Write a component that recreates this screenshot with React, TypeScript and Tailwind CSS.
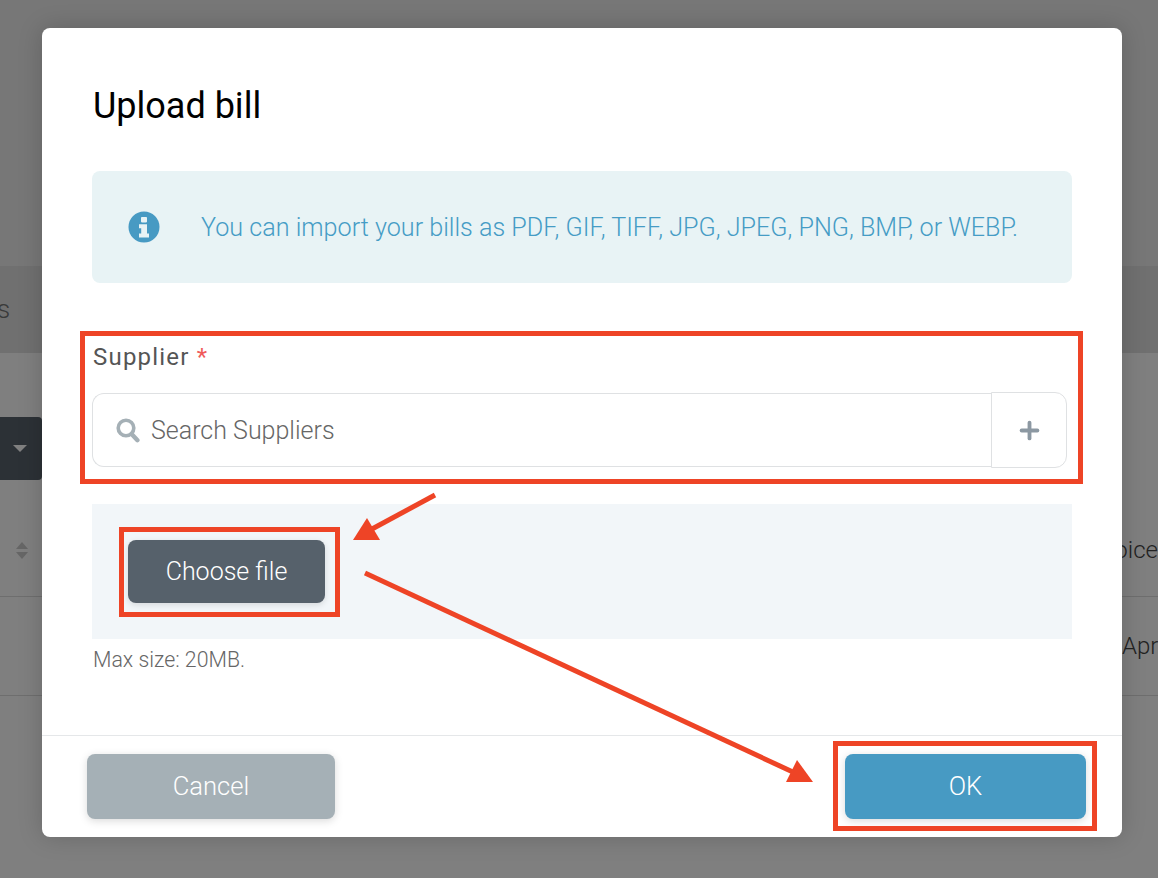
import { Plus } from 'lucide-react';

const FONT = "font-['Roboto','Liberation_Sans',sans-serif]";

function InfoIcon() {
  return (
    <svg width="32" height="32" viewBox="0 0 32 32" className="shrink-0">
      <circle cx="16" cy="16" r="15.5" fill="#479ac3" />
      <rect x="13" y="6" width="6" height="5.4" rx="0.8" fill="#e8f3f5" />
      <path d="M11 13.2h8v9.4h2v4h-10v-4h2.2v-5.4h-2.2z" fill="#e8f3f5" />
    </svg>
  );
}

function SearchIcon() {
  return (
    <svg width="24" height="25" viewBox="0 0 24 25" fill="none" className="shrink-0">
      <circle cx="10" cy="10" r="7.8" stroke="#a5b0b6" strokeWidth="3.6" />
      <path d="M15.6 16L21.4 22.2" stroke="#a5b0b6" strokeWidth="4.4" strokeLinecap="round" />
    </svg>
  );
}

function Backdrop() {
  return (
    <div className="flex flex-col h-full bg-[#7f7f7f] text-[#222]">
      <div className="h-[266px] bg-[#777777]" />
      <div className="h-[87px] bg-[#707070] flex items-center">
        <span className="text-[26px] font-light text-[#3a3a3a] -ml-[3px]">s</span>
      </div>
      <div className="h-[64px]" />
      <div className="h-[63px] w-[42px] bg-[#2c3136] rounded-r flex items-center justify-end pr-[15px]">
        <span className="w-0 h-0 border-x-[7px] border-x-transparent border-t-[7px] border-t-[#808080]" />
      </div>
      <div className="h-[117px] border-b border-[#6e6e6e] flex items-center justify-between pt-[24px]">
        <span className="ml-[16px] flex flex-col gap-[3px]">
          <span className="w-0 h-0 border-x-[6px] border-x-transparent border-b-[7px] border-b-[#666]" />
          <span className="w-0 h-0 border-x-[6px] border-x-transparent border-t-[7px] border-t-[#666]" />
        </span>
        <span className="text-[24px] font-light w-[36px] overflow-hidden whitespace-nowrap flex justify-end">Invoice</span>
      </div>
      <div className="h-[99px] border-b border-[#6e6e6e] flex items-center justify-end">
        <span className="text-[24px] font-light w-[36px] overflow-hidden whitespace-nowrap">Apr</span>
      </div>
    </div>
  );
}

function Dialog() {
  return (
    <div className="absolute left-[42px] top-[28px] w-[1080px] h-[809px] bg-white rounded-lg shadow-[0_0_24px_rgba(0,0,0,0.18)] flex flex-col">
      <div className="flex-1 px-[50px] pt-[55px]">
        <h2 className="text-[36px] leading-[46px] text-black font-normal pl-[1px]">Upload bill</h2>
        <div className="mt-[42px] h-[112px] bg-[#e8f3f5] rounded-lg flex items-center pl-[36px] gap-[41px]">
          <InfoIcon />
          <p className="text-[25.15px] font-light text-[#459cc5] whitespace-nowrap pt-[1px]">
            You can import your bills as PDF, GIF, TIFF, JPG, JPEG, PNG, BMP, or WEBP.
          </p>
        </div>
        <label className="block mt-[58px] pl-[1px] text-[24px] leading-[32px] font-[450] tracking-[1.2px] text-[#555]">
          Supplier <span className="text-[#ef5a5a]">*</span>
        </label>
        <div className="mt-[19px] flex items-center w-[975px]">
          <div className="w-[900px] h-[74px] border border-[#dfe1e3] border-r-0 rounded-l-xl flex items-center pl-[23px] gap-[11px]">
            <SearchIcon />
            <span className="text-[25px] font-light text-[#666] pt-[1px]">Search Suppliers</span>
          </div>
          <div className="w-[76px] h-[76px] border border-[#dfe1e3] rounded-r-xl flex items-center justify-center">
            <Plus size={27} strokeWidth={3.4} className="text-[#8c98a2]" />
          </div>
        </div>
        <div className="mt-[36px] h-[135px] bg-[#f2f6f9] flex items-center pl-[36px]">
          <button className="w-[197px] h-[63px] rounded-lg bg-[#56616b] text-white text-[25px] font-light shadow-[0_2px_6px_rgba(0,0,0,0.12)]">
            Choose file
          </button>
        </div>
        <p className="mt-[7px] pl-[1px] text-[21.3px] leading-[28px] font-light text-[#666]">Max size: 20MB.</p>
      </div>
      <div className="h-[102px] border-t border-[#e5e7e9] flex items-start justify-between pl-[45px] pr-[36px] pt-[18px]">
        <button className="w-[248px] h-[65px] rounded-lg bg-[#a5b0b6] text-white text-[25.6px] font-light shadow-[0_2px_8px_rgba(0,0,0,0.15)]">
          Cancel
        </button>
        <button className="w-[241px] h-[65px] rounded-lg bg-[#479ac3] text-white text-[25.6px] font-light shadow-[0_2px_8px_rgba(0,0,0,0.15)]">
          OK
        </button>
      </div>
    </div>
  );
}

function Annotations() {
  return (
    <>
      <div className="absolute left-[80px] top-[331px] w-[1003px] h-[153px] border-[5px] border-[#ee4426]" />
      <div className="absolute left-[119px] top-[527px] w-[221px] h-[90px] border-[5px] border-[#ee4426]" />
      <div className="absolute left-[833px] top-[741px] w-[264px] h-[90px] border-[5px] border-[#ee4426]" />
      <svg className="absolute left-0 top-0 pointer-events-none" width="1158" height="878" viewBox="0 0 1158 878">
        <path d="M435 495L372 529" stroke="#ee4426" strokeWidth="5" fill="none" />
        <path d="M353 540L367 518L380 540Z" fill="#ee4426" />
        <path d="M365 573L795 773" stroke="#ee4426" strokeWidth="5" fill="none" />
        <path d="M813 782L786 782L797 760Z" fill="#ee4426" />
      </svg>
    </>
  );
}

export default function App() {
  return (
    <div className={`relative w-full h-[878px] overflow-hidden ${FONT}`}>
      <Backdrop />
      <Dialog />
      <Annotations />
    </div>
  );
}
